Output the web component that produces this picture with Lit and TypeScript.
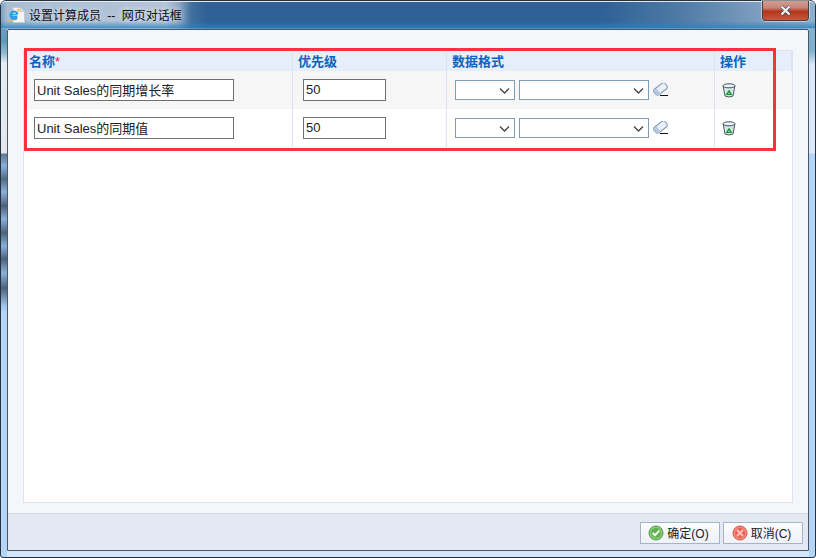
import { LitElement, html, css, unsafeCSS } from "lit";
import { customElement } from "lit/decorators.js";

const chevron = "data:image/svg+xml," + encodeURIComponent(
  '<svg xmlns="http://www.w3.org/2000/svg" width="11" height="7"><path d="M1 1.5 L5.5 6 L10 1.5" fill="none" stroke="#444" stroke-width="1.3"/></svg>'
);

const rows = [
  { name: "Unit Sales的同期增长率", prio: "50" },
  { name: "Unit Sales的同期值", prio: "50" },
];

const eraser = html`<svg class="eraser" width="16" height="14" viewBox="0 0 16 14">
  <g transform="rotate(-38 7.5 6)">
    <rect x="0.5" y="2.4" width="14" height="7.2" rx="2.4" fill="#eaeff8" stroke="#7d96bb"/>
    <path d="M3 2.8 H4.8 V9.2 H3 Q.9 9.2 .9 6 Q.9 2.8 3 2.8Z" fill="#b6c7e2"/>
  </g>
  <path d="M7 12.5H15" stroke="#111" stroke-width="1"/>
</svg>`;

const trash = html`<svg class="trash" width="14" height="15" viewBox="0 0 14 15">
  <path d="M1.2 3 L3 13 Q7 15 11 13 L12.8 3Z" fill="#e9f0f2" stroke="#3f5560"/>
  <path d="M3 4.5 L4 12.6 Q7 13.8 10 12.6 L11 4.5Z" fill="#c8d6dc" opacity=".5"/>
  <ellipse cx="7" cy="2.8" rx="6" ry="2" fill="#f1f4f6" stroke="#3f5560"/>
  <path d="M7 8 L9.2 11.4 H4.8Z" fill="#fff" stroke="#0e9a2c" stroke-width="1.4"/>
</svg>`;

const ieLogo = html`<svg width="17" height="16" viewBox="0 0 17 16">
  <path d="M5 .5H12.5L16.5 4.5V15.5H5Z" fill="#f4f5f4" stroke="#c5c9cc"/>
  <path d="M12.5 .5V4.5H16.5" fill="#dde2e6" stroke="#c5c9cc"/>
  <path d="M9.3 9.8 H3 A3.6 3.6 0 1 1 9.6 7 M3.3 10.4 A3.6 3.6 0 0 0 9 11" fill="none" stroke="#2f9be0" stroke-width="2"/>
  <path d="M3 7.5H9.4" stroke="#2f9be0" stroke-width="1.5"/>
  <path d="M1 13.5 Q1 15.5 5 13 M9 3 Q11.5 1.5 11 5" fill="none" stroke="#f2b632" stroke-width="1.4"/>
</svg>`;

@customElement("app-root")
export class AppRoot extends LitElement {
  static styles = css`
    :host {
      display: block;
      width: 816px;
      height: 558px;
      font-family: "Liberation Sans", "Noto Sans CJK SC", sans-serif;
    }
    .window {
      position: relative;
      box-sizing: border-box;
      width: 816px;
      height: 558px;
      padding: 0 6px 6px;
      display: flex;
      flex-direction: column;
      border-radius: 6px 6px 3px 3px;
      border: 1px solid #26323e;
      background:
        linear-gradient(180deg,
          #8fb0cc 0, #5f97b8 40px, #8fbcd0 52px, #e6ecf0 62px, #e4e8ec 152px,
          #5f7590 153px, #8ab0d8 165px, #506a85 178px, #8ab0d8 191px,
          #4a627c 205px, #8ab0d8 218px, #4a627c 232px, #8ab0d8 245px,
          #4a627c 258px, #8ab0d8 272px, #4a627c 287px, #a0c4ea 305px,
          #b3d5f8 312px, #b3d5f8 100%) no-repeat 0 0 / 6px 100%,
        linear-gradient(180deg,
          #8fb0cc 0, #7fb0cc 50px, #dbe9f8 64px, #dbe9f8 152px,
          #b3d5f8 153px, #b3d5f8 100%) no-repeat 100% 0 / 6px 100%,
        #d3e7fb;
    }
    .titlebar {
      height: 28px;
      margin: 0 -6px;
      padding: 0 6px 2px 7px;
      display: flex;
      align-items: center;
      gap: 4px;
      border-radius: 5px 5px 0 0;
      border-top: 1px solid #e3ecf4;
      box-sizing: border-box;
      background:
        linear-gradient(180deg, rgba(44,128,190,0) 70%, rgba(40,130,190,.75) 95%, rgba(150,200,230,.6) 100%),
        linear-gradient(90deg, #7d9fbf 0, #a9bdd3 6px, #b5c4d7 165px, #8ea6c3 178px, #42719f 190px, #2f6096 205px, #2f6096 600px, #4f7ba6 680px, #7f9fc0 760px, #8fb0cc 100%);
    }
    .title {
      font-size: 12px;
      word-spacing: 3px;
      color: #0c0c14;
      text-shadow: 0 0 6px rgba(255,255,255,.9);
    }
    .close {
      align-self: flex-start;
      margin-top: -1px;
      margin-left: auto;
      width: 47px;
      height: 20px;
      display: flex;
      align-items: center;
      justify-content: center;
      box-sizing: border-box;
      border: 1px solid #4f3a3a;
      border-top: none;
      border-radius: 0 0 4px 4px;
      background: linear-gradient(180deg, #d09c92 0, #c9867a 35%, #b5351d 55%, #c65a3c 100%);
      box-shadow: 0 0 0 1px rgba(255,255,255,.45);
    }
    .client {
      flex: 1;
      min-height: 0;
      display: flex;
      flex-direction: column;
      border: 1px solid #48566a;
      border-radius: 2px 2px 0 0;
      background: #f4f6fa;
    }
    .content {
      flex: 1;
      min-height: 0;
      padding: 20px 15px 10px 15px;
      display: flex;
      border-bottom: 1px solid #d2d6de;
    }
    .panel {
      flex: 1;
      border: 1px solid #dbe3f0;
      background: #fff;
    }
    .grid {
      display: grid;
      grid-template-columns: 269px 154px 268px 1fr;
    }
    .th {
      height: 20px;
      box-sizing: border-box;
      padding: 1px 0 0 5px;
      background: #e6eefb;
      color: #0b62bf;
      font-size: 13px;
      font-weight: bold;
      line-height: 20px;
      border-right: 1px solid #dbe3f0;
    }
    .th:last-child { border-right: none; }
    .th .req { color: #e8203a; font-weight: normal; }
    .td {
      height: 38px;
      box-sizing: border-box;
      display: flex;
      align-items: center;
      border-right: 1px solid #dbe3f0;
    }
    .td.last { border-right: none; }
    .odd { background: #f6f6f6; }
    .c1 { padding-left: 10px; }
    .c2 { padding-left: 10px; }
    .c3 { padding-left: 8px; gap: 4px; }
    .c4 { padding-left: 7px; }
    input {
      box-sizing: border-box;
      height: 22px;
      padding: 0 2px 2px;
      border: 1px solid #707070;
      background: #fff;
      font: 13px "Liberation Sans", "Noto Sans CJK SC", sans-serif;
      color: #222;
      outline: none;
    }
    .name { width: 200px; }
    .prio { width: 83px; }
    select {
      appearance: none;
      -webkit-appearance: none;
      box-sizing: border-box;
      height: 20px;
      border: 1px solid #7f9db9;
      border-radius: 0;
      background: #fff url("${unsafeCSS(chevron)}") no-repeat right 4px center;
      outline: none;
    }
    .s1 { width: 60px; }
    .s2 { width: 130px; }
    .eraser { display: block; }
    .trash { display: block; }
    .footer {
      height: 36px;
      box-sizing: border-box;
      padding: 8px 5px 0 0;
      display: flex;
      justify-content: flex-end;
      gap: 3px;
      background: #e3e9f3;
    }
    button {
      box-sizing: border-box;
      width: 80px;
      height: 22px;
      display: flex;
      align-items: center;
      justify-content: center;
      gap: 3px;
      padding: 0 3px 2px 0;
      border: 1px solid #a9b4c2;
      background: linear-gradient(180deg, #fbfcfe, #eef1f7);
      font: 12px "Liberation Sans", "Noto Sans CJK SC", sans-serif;
      color: #1a1a1a;
    }
    button svg { margin-top: 2px; }
    .annot {
      position: absolute;
      left: 23px;
      top: 47px;
      width: 752px;
      height: 103px;
      box-sizing: border-box;
      border: 3px solid #fb3338;
      pointer-events: none;
    }
  `;

  render() {
    return html`
      <div class="window">
        <div class="titlebar">
          ${ieLogo}
          <span class="title">设置计算成员 -- 网页对话框</span>
          <div class="close">
            <svg width="13" height="11" viewBox="0 0 13 11">
              <path d="M2.5 1.5 L10.5 9.5 M10.5 1.5 L2.5 9.5" stroke="#3d4a55" stroke-width="3.6"/>
              <path d="M2.5 1.5 L10.5 9.5 M10.5 1.5 L2.5 9.5" stroke="#f3f5f7" stroke-width="2.2"/>
            </svg>
          </div>
        </div>
        <div class="client">
          <div class="content">
            <div class="panel">
              <div class="grid">
                <div class="th">名称<span class="req">*</span></div>
                <div class="th">优先级</div>
                <div class="th">数据格式</div>
                <div class="th">操作</div>
                ${rows.map((r, i) => {
                  const odd = i % 2 === 0 ? "odd" : "";
                  return html`
                    <div class="td c1 ${odd}"><input class="name" .value=${r.name} /></div>
                    <div class="td c2 ${odd}"><input class="prio" .value=${r.prio} /></div>
                    <div class="td c3 ${odd}">
                      <select class="s1"></select>
                      <select class="s2"></select>
                      ${eraser}
                    </div>
                    <div class="td c4 last ${odd}">${trash}</div>
                  `;
                })}
              </div>
            </div>
          </div>
          <div class="footer">
            <button>
              <svg width="16" height="16" viewBox="0 0 16 16">
                <circle cx="8" cy="8" r="7" fill="#8ccb7c" stroke="#4d9a48"/>
                <circle cx="8" cy="8" r="5" fill="#5fb150"/>
                <path d="M4.8 8 L7 10.3 L11.3 5.6" fill="none" stroke="#fff" stroke-width="2"/>
              </svg>确定(O)
            </button>
            <button>
              <svg width="16" height="16" viewBox="0 0 16 16">
                <circle cx="8" cy="8" r="7" fill="#f08a7c" stroke="#d9574c"/>
                <circle cx="8" cy="8" r="5" fill="#ec5f50"/>
                <path d="M5 5 L11 11 M11 5 L5 11" stroke="#f9c4bb" stroke-width="2"/>
              </svg>取消(C)
            </button>
          </div>
        </div>
        <div class="annot"></div>
      </div>
    `;
  }
}
